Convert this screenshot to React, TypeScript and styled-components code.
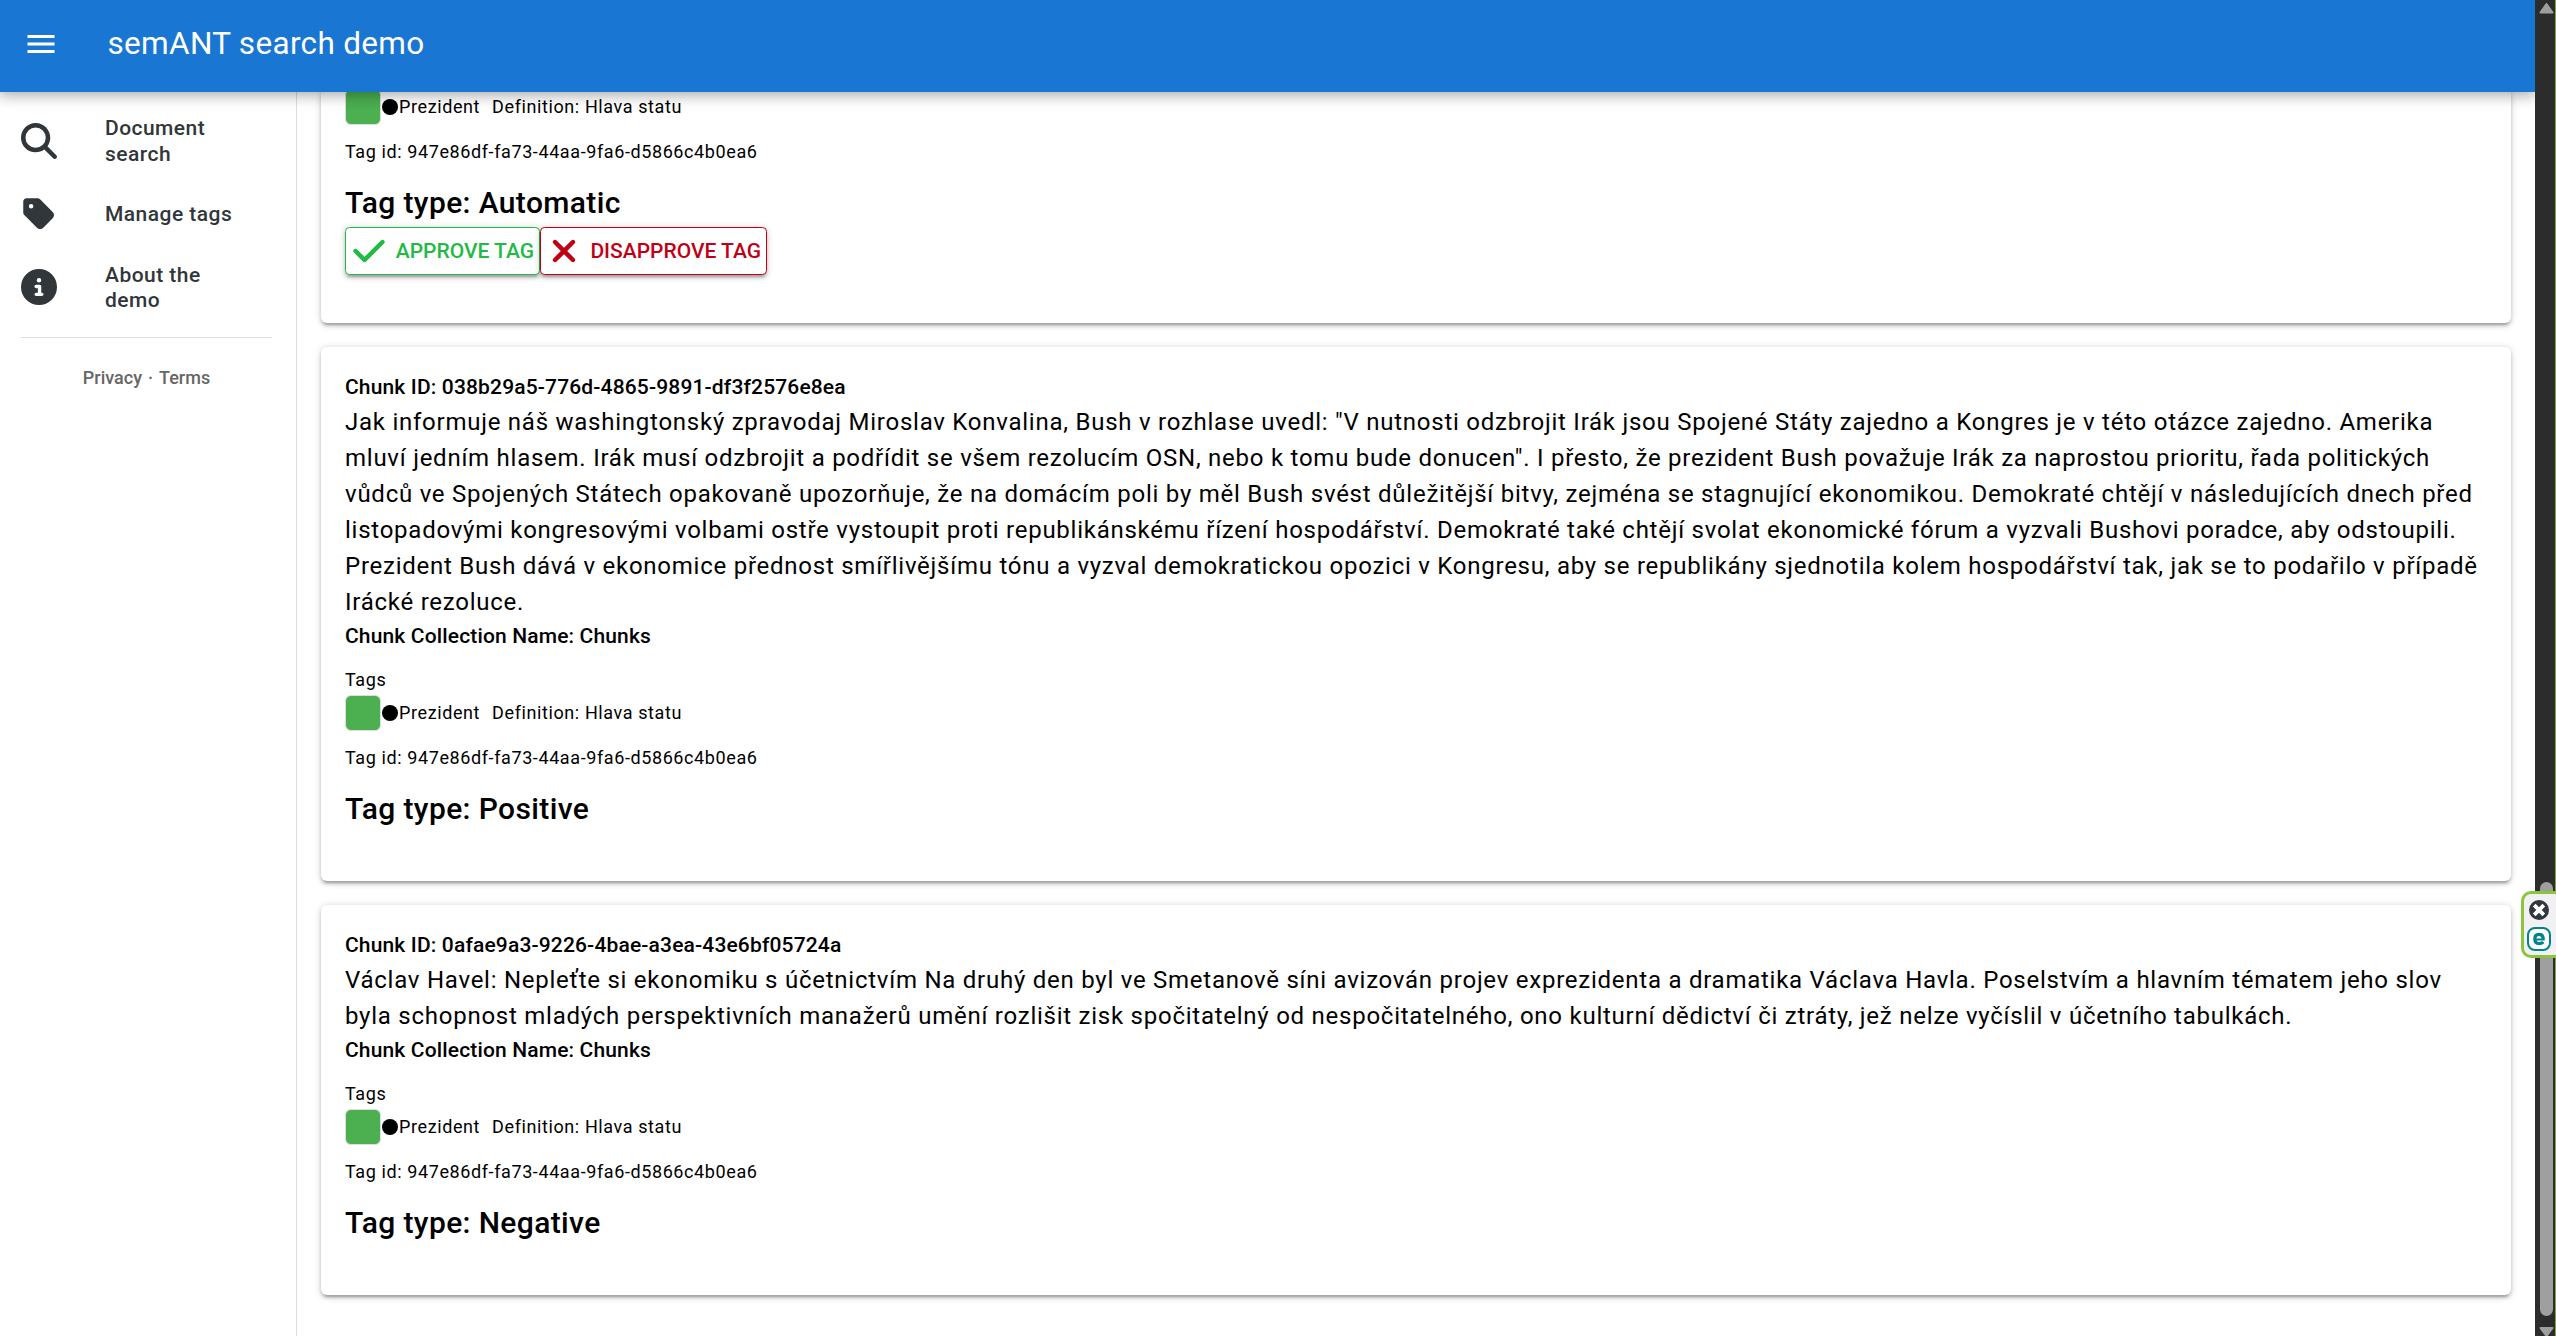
import React from 'react';
import styled, { createGlobalStyle } from 'styled-components';
import { FaMagnifyingGlass, FaTag, FaCircleInfo, FaCheck, FaXmark } from 'react-icons/fa6';

const GlobalStyle = createGlobalStyle`
  * { box-sizing: border-box; }
  html, body { margin: 0; height: 100%; overflow: hidden; }
  body {
    background: #fff;
    color: #000;
    font-family: Roboto, "Noto Sans", sans-serif;
    -webkit-font-smoothing: antialiased;
  }
`;

const Window = styled.div`
  display: flex;
  width: 2556px;
  height: 1336px;
  overflow: hidden;
`;

const Page = styled.div`
  flex: 1;
  min-width: 0;
  display: flex;
  flex-direction: column;
  overflow: hidden;
`;

const Header = styled.header`
  position: relative;
  z-index: 2;
  flex: none;
  height: 92px;
  padding: 0 18px 4px;
  display: flex;
  align-items: center;
  background: #1976d2;
  color: #fff;
  box-shadow: 0 0 15px 3px rgba(0, 0, 0, 0.2), 0 0 15px rgba(0, 0, 0, 0.24);
`;

const MenuButton = styled.button`
  width: 45px;
  height: 63px;
  padding: 0;
  border: 0;
  background: none;
  color: inherit;
  display: flex;
  align-items: center;
  justify-content: center;
`;

const Title = styled.div`
  padding-left: 44.5px;
  font-size: 31.5px;
  line-height: 48px;
  letter-spacing: 0.01em;
`;

const Body = styled.div`
  flex: 1;
  min-height: 0;
  display: flex;
`;

const Drawer = styled.nav`
  flex: none;
  width: 297px;
  padding: 12px 24px 0 21px;
  border-right: 1px solid #dedede;
`;

const NavItem = styled.a`
  height: 73.4px;
  display: flex;
  align-items: center;
  color: #31363a;
  font-size: 21px;
  font-weight: 500;
  line-height: 25.2px;
  letter-spacing: 0.022em;
`;

const NavIcon = styled.span`
  flex: none;
  width: 84px;
  display: flex;
`;

const NavLabel = styled.span`
  width: 140px;
  padding-top: 2px;
`;

const Divider = styled.div`
  height: 1px;
  margin-top: 13px;
  background: #dedede;
`;

const Legal = styled.div`
  display: flex;
  justify-content: center;
  gap: 6px;
  margin-top: 26px;
  color: #666;
  font-size: 18px;
  font-weight: 500;
  line-height: 28px;
`;

const Content = styled.main`
  flex: 1;
  min-width: 0;
  padding: 0 24px;
  display: flex;
  flex-direction: column;
  gap: 24px;
`;

const Card = styled.section<{ $clipped?: boolean }>`
  flex: none;
  padding: 24px 24px 48px;
  ${(p) => p.$clipped && 'padding-top: 0; margin-top: -3px; border-top-left-radius: 0; border-top-right-radius: 0;'}
  border-radius: 6px;
  background: #fff;
  box-shadow: 0 1.5px 7.5px rgba(0, 0, 0, 0.2), 0 3px 3px rgba(0, 0, 0, 0.14),
    0 4.5px 1.5px -3px rgba(0, 0, 0, 0.12);
`;

const Subtitle = styled.div`
  font-size: 21px;
  font-weight: 500;
  line-height: 33px;
  letter-spacing: 0.00714em;
`;

const ChunkText = styled.p`
  margin: 0;
  font-size: 24px;
  line-height: 36px;
  letter-spacing: 0.03125em;
`;

const Caption = styled.div<{ $top?: number }>`
  margin-top: ${(p) => p.$top ?? 0}px;
  font-size: 18px;
  line-height: 30px;
  letter-spacing: 0.03333em;
`;

const TagRow = styled(Caption)`
  height: 36px;
  display: flex;
  align-items: center;
`;

const Swatch = styled.span`
  width: 36px;
  height: 36px;
  border: 1px solid #ddd;
  border-radius: 6px;
  background: #4caf50;
`;

const Dot = styled.span`
  width: 16px;
  height: 16px;
  margin: 0 1px;
  border-radius: 50%;
  background: #000;
`;

const Definition = styled.span`
  margin-left: 12px;
`;

const TagType = styled.div`
  margin-top: 12px;
  font-size: 30px;
  font-weight: 500;
  line-height: 48px;
  letter-spacing: 0.0125em;
`;

const Actions = styled.div`
  display: flex;
`;

const ActionButton = styled.button<{ $color: string; $width: number }>`
  width: ${(p) => p.$width}px;
  height: 48px;
  padding: 0 5px;
  border: 1px solid ${(p) => p.$color};
  border-radius: 4.5px;
  background: #fff;
  color: ${(p) => p.$color};
  display: flex;
  align-items: center;
  justify-content: space-between;
  font: 500 21px/36px Roboto, sans-serif;
  white-space: nowrap;
  box-shadow: 0 1.5px 7.5px rgba(0, 0, 0, 0.2), 0 3px 3px rgba(0, 0, 0, 0.14),
    0 4.5px 1.5px -3px rgba(0, 0, 0, 0.12);
`;

const Scrollbar = styled.div`
  position: relative;
  flex: none;
  width: 21px;
  padding: 2px 1px 0 4px;
  background: #2c2c2c;
  border-right: 1px solid #7cae3f;
  display: flex;
  flex-direction: column;
  align-items: center;
`;

const Arrow = styled.svg`
  flex: none;
  width: 15px;
  height: 12px;
`;

const Thumb = styled.div`
  flex: none;
  width: 13px;
  height: 434px;
  margin: 868px 0 10px;
  border-radius: 7px;
  background: #9f9f9f;
`;

const Extension = styled.aside`
  position: absolute;
  top: 891px;
  right: -1px;
  width: 35px;
  height: 67px;
  padding: 6px 2px 0 0;
  border: 3px solid #8bc53f;
  border-right: 0;
  border-radius: 10px 0 0 10px;
  background: #f1f1f3;
  display: flex;
  flex-direction: column;
  align-items: center;
  gap: 7px;
`;

const PREZIDENT = { name: 'Prezident', definition: 'Hlava statu', id: '947e86df-fa73-44aa-9fa6-d5866c4b0ea6' };

const CHUNKS = [
  {
    id: '038b29a5-776d-4865-9891-df3f2576e8ea',
    type: 'Positive',
    text: 'Jak informuje náš washingtonský zpravodaj Miroslav Konvalina, Bush v rozhlase uvedl: "V nutnosti odzbrojit Irák jsou Spojené Státy zajedno a Kongres je v této otázce zajedno. Amerika mluví jedním hlasem. Irák musí odzbrojit a podřídit se všem rezolucím OSN, nebo k tomu bude donucen". I přesto, že prezident Bush považuje Irák za naprostou prioritu, řada politických vůdců ve Spojených Státech opakovaně upozorňuje, že na domácím poli by měl Bush svést důležitější bitvy, zejména se stagnující ekonomikou. Demokraté chtějí v následujících dnech před listopadovými kongresovými volbami ostře vystoupit proti republikánskému řízení hospodářství. Demokraté také chtějí svolat ekonomické fórum a vyzvali Bushovi poradce, aby odstoupili. Prezident Bush dává v ekonomice přednost smířlivějšímu tónu a vyzval demokratickou opozici v Kongresu, aby se republikány sjednotila kolem hospodářství tak, jak se to podařilo v případě Irácké rezoluce.',
  },
  {
    id: '0afae9a3-9226-4bae-a3ea-43e6bf05724a',
    type: 'Negative',
    text: 'Václav Havel: Nepleťte si ekonomiku s účetnictvím Na druhý den byl ve Smetanově síni avizován projev exprezidenta a dramatika Václava Havla. Poselstvím a hlavním tématem jeho slov byla schopnost mladých perspektivních manažerů umění rozlišit zisk spočitatelný od nespočitatelného, ono kulturní dědictví či ztráty, jež nelze vyčíslil v účetního tabulkách.',
  },
];

function TagDetails({ type }: { type: string }) {
  return (
    <>
      <TagRow>
        <Swatch />
        <Dot />
        <span>{PREZIDENT.name}</span>
        <Definition>Definition: {PREZIDENT.definition}</Definition>
      </TagRow>
      <Caption $top={12}>Tag id: {PREZIDENT.id}</Caption>
      <TagType>Tag type: {type}</TagType>
    </>
  );
}

export default function App() {
  return (
    <Window>
      <GlobalStyle />
      <Page>
        <Header>
          <MenuButton aria-label="Menu">
            <svg width="36" height="36" viewBox="0 0 24 24" fill="currentColor">
              <path d="M3 18h18v-2H3v2zm0-5h18v-2H3v2zm0-7v2h18V6H3z" />
            </svg>
          </MenuButton>
          <Title>semANT search demo</Title>
        </Header>
        <Body>
          <Drawer>
            <NavItem>
              <NavIcon><FaMagnifyingGlass size={36} /></NavIcon>
              <NavLabel>Document search</NavLabel>
            </NavItem>
            <NavItem>
              <NavIcon><FaTag size={36} /></NavIcon>
              <NavLabel>Manage tags</NavLabel>
            </NavItem>
            <NavItem>
              <NavIcon><FaCircleInfo size={36} /></NavIcon>
              <NavLabel>About the demo</NavLabel>
            </NavItem>
            <Divider />
            <Legal>
              <span>Privacy</span>
              <span>·</span>
              <span>Terms</span>
            </Legal>
          </Drawer>
          <Content>
            <Card $clipped>
              <TagDetails type="Automatic" />
              <Actions>
                <ActionButton $color="#21ba45" $width={195}>
                  <FaCheck size={36} />
                  APPROVE TAG
                </ActionButton>
                <ActionButton $color="#c10015" $width={227}>
                  <FaXmark size={36} />
                  DISAPPROVE TAG
                </ActionButton>
              </Actions>
            </Card>
            {CHUNKS.map((chunk) => (
              <Card key={chunk.id}>
                <Subtitle>Chunk ID: {chunk.id}</Subtitle>
                <ChunkText>{chunk.text}</ChunkText>
                <Subtitle>Chunk Collection Name: Chunks</Subtitle>
                <Caption $top={12}>Tags</Caption>
                <TagDetails type={chunk.type} />
              </Card>
            ))}
          </Content>
        </Body>
      </Page>
      <Scrollbar>
        <Arrow viewBox="0 0 15 12">
          <path d="M7.5 2 L13.5 10.5 H1.5 Z" fill="#9f9f9f" stroke="#9f9f9f" strokeWidth="2" strokeLinejoin="round" />
        </Arrow>
        <Thumb />
        <Arrow viewBox="0 0 15 12">
          <path d="M7.5 10 L13.5 2 H1.5 Z" fill="#9f9f9f" stroke="#9f9f9f" strokeWidth="2" strokeLinejoin="round" />
        </Arrow>
        <Extension>
          <svg width="20" height="20" viewBox="0 0 20 20">
            <circle cx="10" cy="10" r="10" fill="#32363f" />
            <path d="M5.2 5.2 L14.8 14.8 M14.8 5.2 L5.2 14.8" stroke="#fff" strokeWidth="3.8" />
          </svg>
          <svg width="24" height="24" viewBox="0 0 24 24">
            <rect x="1" y="1" width="22" height="22" rx="7" fill="#fff" stroke="#00838a" strokeWidth="2" />
            <path d="M16.3 15 Q15 16.5 12 16.5 Q7.8 16.5 7.8 12 Q7.8 7.3 12 7.3 Q16.2 7.3 16.2 12.4" fill="none" stroke="#00838a" strokeWidth="3.2" />
            <path d="M8 12.5 H17.6" stroke="#00838a" strokeWidth="2" />
          </svg>
        </Extension>
      </Scrollbar>
    </Window>
  );
}
